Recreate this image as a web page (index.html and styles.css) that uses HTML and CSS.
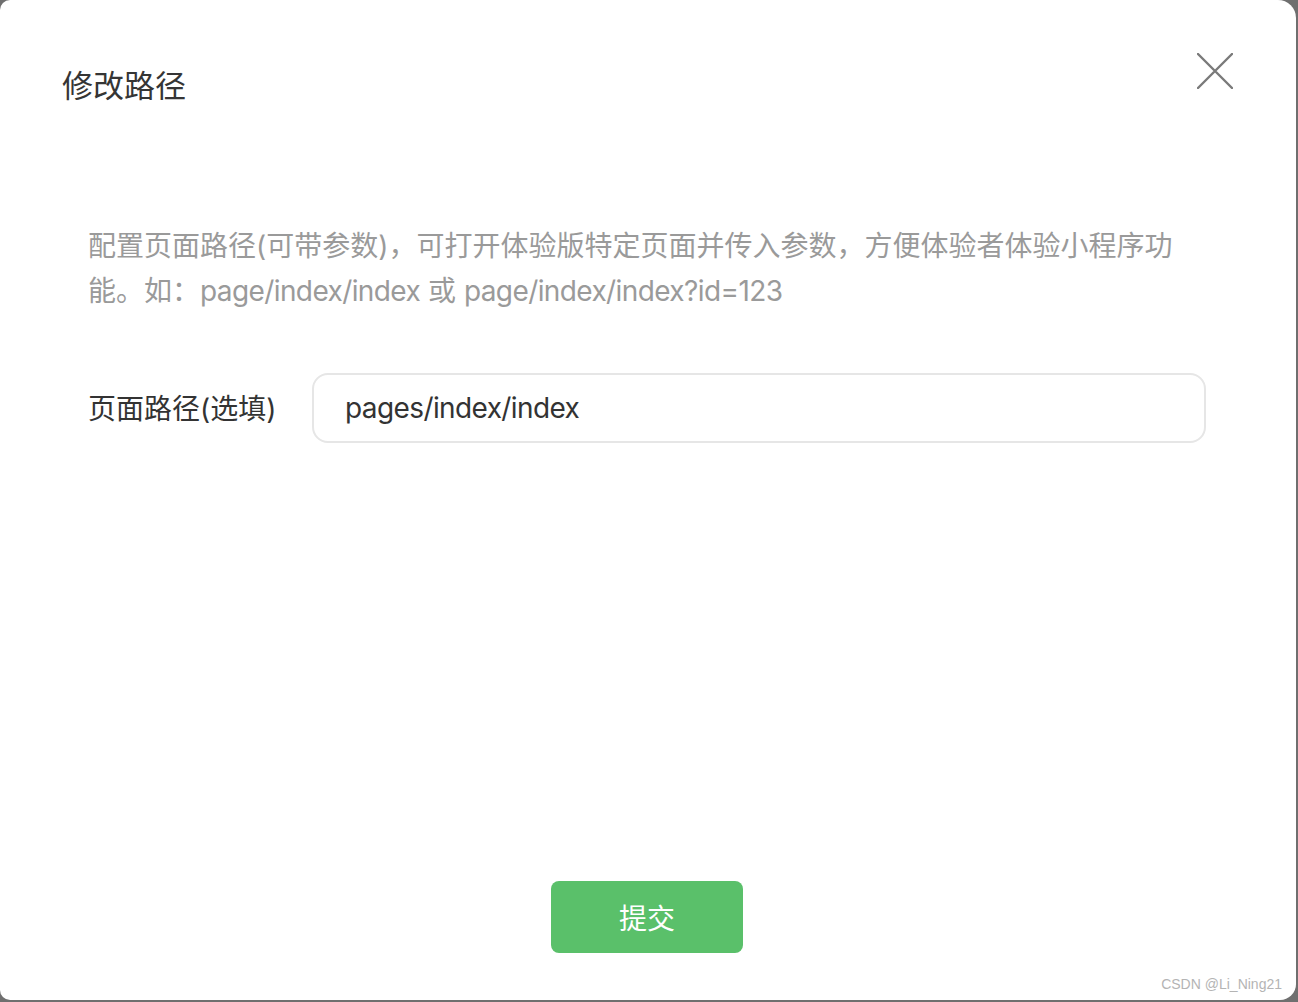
FILE: index.html
```html
<!DOCTYPE html>
<html lang="zh-CN">
<head>
<meta charset="utf-8">
<title>修改路径</title>
<link rel="stylesheet" href="styles.css">
</head>
<body>
<div class="dialog">
  <div class="header">
    <h1 class="title">修改路径</h1>
    <button class="close" aria-label="关闭">
      <svg width="36" height="36" viewBox="0 0 36 36"><path d="M1 1 L35 35 M35 1 L1 35" stroke="#7a7a7a" stroke-width="2.4" stroke-linecap="round" fill="none"/></svg>
    </button>
  </div>
  <div class="body">
    <p class="desc">配置页面路径(可带参数)，可打开体验版特定页面并传入参数，方便体验者体验小程序功能。如：<span class="latin">page/index/index</span> 或 <span class="latin">page/index/index?id=123</span></p>
    <div class="row">
      <label class="label">页面路径(选填)</label>
      <div class="input">pages/index/index</div>
    </div>
  </div>
  <div class="footer">
    <button class="submit">提交</button>
  </div>
  <div class="watermark">CSDN @Li_Ning21</div>
</div>
</body>
</html>
```
FILE: styles.css
```css
html, body {
  margin: 0;
  padding: 0;
  background: #6f6f6f;
}
body {
  width: 1298px;
  height: 1002px;
  overflow: hidden;
  font-family: Inter, "Noto Sans CJK SC", sans-serif;
}
.dialog {
  position: relative;
  width: 1296px;
  height: 1000px;
  background: #fff;
  border-radius: 10px 18px 16px 10px;
  display: flex;
  flex-direction: column;
  box-sizing: border-box;
}
.header {
  display: flex;
  justify-content: space-between;
  align-items: flex-start;
  padding: 53px 63px 0 62px;
}
.title {
  margin: 8px 0 0;
  font-size: 31px;
  font-weight: 400;
  line-height: 46px;
  color: #353535;
  font-family: "Noto Sans CJK SC", sans-serif;
}
.close {
  border: 0;
  background: none;
  padding: 0;
  width: 36px;
  height: 36px;
  display: block;
}
.close svg { display: block; }
.body {
  padding: 0 88px;
}
.desc {
  margin: 117px 0 0;
  width: 1100px;
  font-size: 28px;
  line-height: 45px;
  color: #9a9a9a;
}
.latin {
  letter-spacing: -0.6px;
}
.row {
  display: flex;
  align-items: center;
  margin-top: 59px;
}
.label {
  width: 224px;
  font-size: 28px;
  color: #333;
  flex-shrink: 0;
  margin-top: -3px;
}
.input {
  width: 894px;
  height: 70px;
  box-sizing: border-box;
  border: 2px solid #e6e6e6;
  border-radius: 16px;
  padding-left: 31px;
  display: flex;
  align-items: center;
  font-size: 28px;
  letter-spacing: -0.6px;
  color: #333;
}
.footer {
  margin-top: auto;
  display: flex;
  justify-content: center;
  padding-bottom: 47px;
}
.submit {
  width: 192px;
  height: 72px;
  border: 0;
  border-radius: 8px;
  background: #5ac06a;
  color: #fff;
  font-size: 28px;
  font-family: "Noto Sans CJK SC", sans-serif;
  margin-left: -2px;
}
.watermark {
  position: absolute;
  right: 14px;
  bottom: 8px;
  font-family: "Liberation Sans", Arial, sans-serif;
  font-size: 14px;
  color: #b4b4b4;
}
```
